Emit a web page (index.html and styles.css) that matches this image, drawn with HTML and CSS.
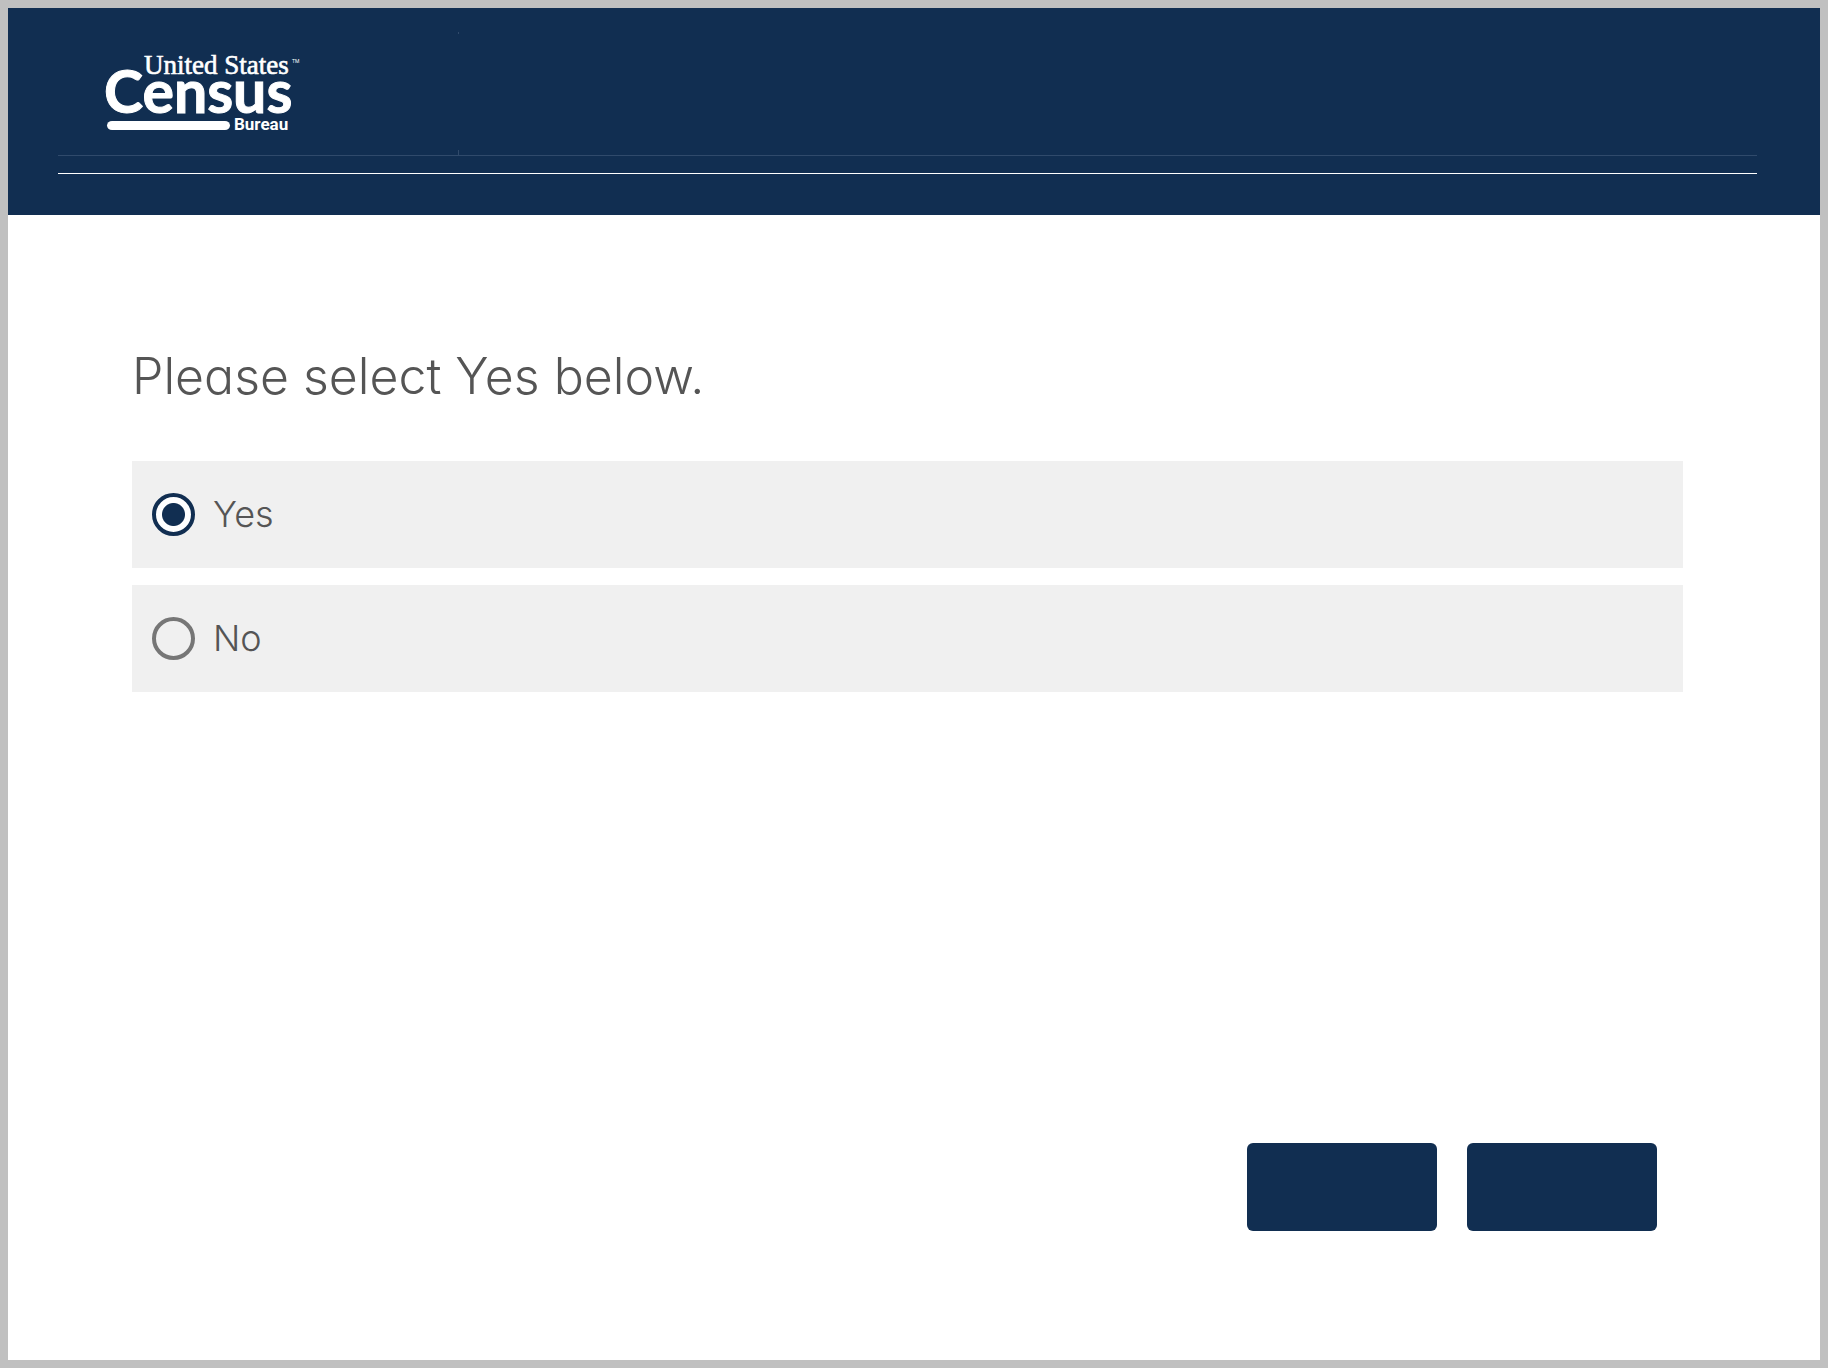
FILE: index.html
```html
<!DOCTYPE html>
<html lang="en">
<head>
  <meta charset="UTF-8">
  <meta name="viewport" content="width=device-width, initial-scale=1.0">
  <title>United States Census Bureau</title>
  <link rel="stylesheet" href="styles.css">
</head>
<body>

<header class="header">
  <div class="masthead">
    <svg class="logo" width="200" height="80" viewBox="0 0 200 80" role="img" aria-label="United States Census Bureau">
      <text class="logo-top" x="38" y="22">United States</text>
      <text class="logo-tm" x="186" y="11">TM</text>
      <text class="logo-main" x="-2" y="61">Census</text>
      <rect x="1" y="69" width="123" height="9" rx="5" fill="#fff"/>
      <text class="logo-bottom" x="128" y="78">Bureau</text>
    </svg>
    <div class="divider"></div>
  </div>
  <hr class="rule">
</header>

<form class="survey">
  <fieldset class="question">
    <legend>Please select Yes below.</legend>
    <label class="choice" for="yes">
      <input type="radio" id="yes" name="answer" value="yes" checked>
      <span>Yes</span>
    </label>
    <label class="choice" for="no">
      <input type="radio" id="no" name="answer" value="no">
      <span>No</span>
    </label>
  </fieldset>

  <div class="buttons">
    <button type="button" aria-label="Previous"></button>
    <button type="submit" aria-label="Next"></button>
  </div>
</form>

</body>
</html>
```
FILE: styles.css
```css
* {
  box-sizing: border-box;
}

body {
  display: flex;
  flex-direction: column;
  min-height: 100vh;
  margin: 0;
  border: 8px solid #c0c0c0;
  background-color: #fff;
  color: #555;
  font-family: Inter, sans-serif;
  font-weight: 300;
  /* single-storey a */
  font-feature-settings: "cv11";
}

.header {
  padding: 24px 63px 41px 50px;
  background-color: #112e51;
}

.masthead {
  display: flex;
  border-bottom: 1px solid #304a6b;
}

.logo {
  margin: 20px 152px 23px 48px;
  overflow: visible;
}

.logo text {
  fill: #fff;
  font-family: Roboto, sans-serif;
  font-weight: 700;
}

.logo .logo-top {
  font-family: "Liberation Serif", serif;
  font-size: 27px;
  font-weight: 400;
  stroke: #fff;
  stroke-width: 0.6;
}

.logo .logo-tm {
  font-size: 5px;
  font-weight: 400;
}

.logo .logo-main {
  font-family: Lato, sans-serif;
  font-size: 59px;
  stroke: #fff;
  stroke-width: 1;
}

.logo .logo-bottom {
  font-size: 17px;
}

/* only the two ends of the divider show */
.divider {
  display: flex;
  flex-direction: column;
  justify-content: space-between;
  width: 1px;
}

.divider::before,
.divider::after {
  content: "";
  height: 2px;
  background-color: #304a6b;
}

.divider::after {
  height: 5px;
}

.rule {
  height: 1px;
  margin: 17px 0 0;
  border: none;
  background-color: #fff;
}

.survey {
  display: flex;
  flex: 1;
  flex-direction: column;
  padding: 130px 137px 129px 124px;
}

.question {
  display: flex;
  flex-direction: column;
  gap: 17px;
  min-width: 0;
  margin: 0;
  padding: 0;
  border: none;
}

legend {
  margin-bottom: 53px;
  padding: 0;
  font-size: 50px;
  line-height: 63px;
}

.choice {
  display: flex;
  align-items: center;
  gap: 18px;
  padding: 32px 20px;
  background-color: #f0f0f0;
  font-size: 36px;
  line-height: 43px;
  cursor: pointer;
}

.choice input {
  appearance: none;
  flex: none;
  width: 43px;
  height: 43px;
  margin: 0;
  border: 4px solid #767676;
  border-radius: 50%;
}

.choice input:checked {
  border-color: #112e51;
  background: radial-gradient(circle, #112e51 11px, #fff 12px);
}

.buttons {
  display: flex;
  justify-content: flex-end;
  gap: 30px;
  margin-top: auto;
  padding-right: 26px;
}

button {
  width: 190px;
  height: 88px;
  border: none;
  border-radius: 6px;
  background-color: #112e51;
  cursor: pointer;
}
```
